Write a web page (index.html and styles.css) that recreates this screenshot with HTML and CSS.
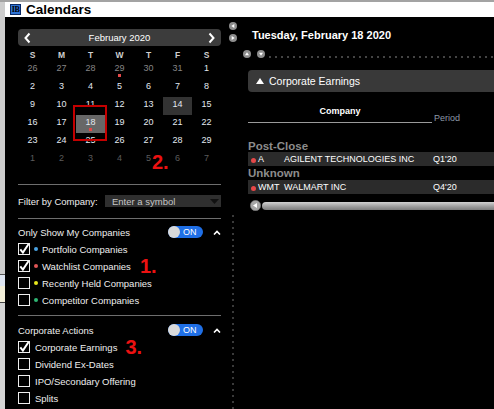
FILE: index.html
```html
<!DOCTYPE html>
<html>

<head>
    <title>Calendars</title>
    <meta name="viewport" content="width=device-width, initial-scale=1.0">
    <link rel="stylesheet" href="styles.css">
</head>

<body>
    <div class="desk"></div>
    <div class="window">
        <div class="titlebar">
            <span class="logo">IB</span>
            <span class="title">Calendars</span>
        </div>
        <div class="main">
            <div class="sidebar">
                <div class="cal">
                    <div class="cal-head">
                        <svg width="7" height="12" viewBox="0 0 7 12"><path d="M5.5 1.5L1.5 6l4 4.5" fill="none" stroke="#fff" stroke-width="2"/></svg>
                        <span>February 2020</span>
                        <svg width="7" height="12" viewBox="0 0 7 12"><path d="M1.5 1.5l4 4.5-4 4.5" fill="none" stroke="#fff" stroke-width="2"/></svg>
                    </div>
                    <div class="cal-grid">
                        <div class="dow">S</div><div class="dow">M</div><div class="dow">T</div><div class="dow">W</div><div class="dow">T</div><div class="dow">F</div><div class="dow">S</div>

                        <div class="day other">26</div><div class="day other">27</div><div class="day other">28</div><div class="day other">29<i class="ev"></i></div><div class="day other">30</div><div class="day other">31</div><div class="day">1</div>
                        <div class="day">2</div><div class="day">3</div><div class="day">4</div><div class="day">5</div><div class="day">6</div><div class="day">7</div><div class="day">8</div>
                        <div class="day">9</div><div class="day">10</div><div class="day">11</div><div class="day">12</div><div class="day">13</div><div class="day sel">14</div><div class="day">15</div>
                        <div class="day">16</div><div class="day">17</div><div class="day today">18<i class="ev"></i></div><div class="day">19</div><div class="day">20</div><div class="day">21</div><div class="day">22</div>
                        <div class="day">23</div><div class="day">24</div><div class="day">25</div><div class="day">26</div><div class="day">27</div><div class="day">28</div><div class="day">29</div>
                        <div class="day next">1</div><div class="day next">2</div><div class="day next">3</div><div class="day next">4</div><div class="day next">5</div><div class="day next">6</div><div class="day next">7</div>
                    </div>
                    <div class="mark-box"></div>
                    <span class="note note-cal">2.</span>
                </div>

                <div class="divider first"></div>

                <div class="filter">
                    <span>Filter by Company:</span>
                    <div class="symbol">
                        <span>Enter a symbol</span>
                        <svg width="9" height="5" viewBox="0 0 9 5"><path d="M0 0h9L4.5 5z" fill="#111"/></svg>
                    </div>
                </div>

                <div class="divider"></div>

                <div class="group-head">
                    <span>Only Show My Companies</span>
                    <div class="toggle"><span class="knob"></span><span>ON</span></div>
                    <svg class="chev" width="8" height="5" viewBox="0 0 8 5"><path d="M1 4.5L4 1.5l3 3" fill="none" stroke="#fff" stroke-width="1.6"/></svg>
                </div>
                <div class="options">
                    <div class="opt">
                        <svg class="cb" viewBox="0 0 12 12"><rect x=".5" y=".5" width="11" height="11" fill="#000" stroke="#eee"/><path d="M2.3 6.4l2.6 3.2L10.6 1" fill="none" stroke="#fff" stroke-width="2"/></svg>
                        <i class="dot blue"></i><span>Portfolio Companies</span>
                    </div>
                    <div class="opt">
                        <svg class="cb" viewBox="0 0 12 12"><rect x=".5" y=".5" width="11" height="11" fill="#000" stroke="#eee"/><path d="M2.3 6.4l2.6 3.2L10.6 1" fill="none" stroke="#fff" stroke-width="2"/></svg>
                        <i class="dot red"></i><span>Watchlist Companies</span><span class="note note-1">1.</span>
                    </div>
                    <div class="opt">
                        <svg class="cb" viewBox="0 0 12 12"><rect x=".5" y=".5" width="11" height="11" fill="#000" stroke="#eee"/></svg>
                        <i class="dot yellow"></i><span>Recently Held Companies</span>
                    </div>
                    <div class="opt">
                        <svg class="cb" viewBox="0 0 12 12"><rect x=".5" y=".5" width="11" height="11" fill="#000" stroke="#eee"/></svg>
                        <i class="dot green"></i><span>Competitor Companies</span>
                    </div>
                </div>

                <div class="divider second"></div>

                <div class="group-head">
                    <span>Corporate Actions</span>
                    <div class="toggle"><span class="knob"></span><span>ON</span></div>
                    <svg class="chev" width="8" height="5" viewBox="0 0 8 5"><path d="M1 4.5L4 1.5l3 3" fill="none" stroke="#fff" stroke-width="1.6"/></svg>
                </div>
                <div class="options">
                    <div class="opt plain">
                        <svg class="cb" viewBox="0 0 12 12"><rect x=".5" y=".5" width="11" height="11" fill="#000" stroke="#eee"/><path d="M2.3 6.4l2.6 3.2L10.6 1" fill="none" stroke="#fff" stroke-width="2"/></svg>
                        <span>Corporate Earnings</span><span class="note note-3">3.</span>
                    </div>
                    <div class="opt plain">
                        <svg class="cb" viewBox="0 0 12 12"><rect x=".5" y=".5" width="11" height="11" fill="#000" stroke="#eee"/></svg>
                        <span>Dividend Ex-Dates</span>
                    </div>
                    <div class="opt plain">
                        <svg class="cb" viewBox="0 0 12 12"><rect x=".5" y=".5" width="11" height="11" fill="#000" stroke="#eee"/></svg>
                        <span>IPO/Secondary Offering</span>
                    </div>
                    <div class="opt plain">
                        <svg class="cb" viewBox="0 0 12 12"><rect x=".5" y=".5" width="11" height="11" fill="#000" stroke="#eee"/></svg>
                        <span>Splits</span>
                    </div>
                </div>
            </div>

            <div class="splitter">
                <svg width="8" height="8" viewBox="0 0 8 8"><circle cx="4" cy="4" r="4" fill="#8e8e8e"/><path d="M2.3 4L5.3 2v4z" fill="#fff"/></svg>
                <svg width="8" height="8" viewBox="0 0 8 8"><circle cx="4" cy="4" r="4" fill="#8e8e8e"/><path d="M5.7 4L2.7 2v4z" fill="#fff"/></svg>
                <div class="split-line"></div>
            </div>

            <div class="content">
                <div class="day-title">Tuesday, February 18 2020</div>
                <div class="nav-row">
                    <svg width="8" height="8" viewBox="0 0 8 8"><circle cx="4" cy="4" r="4" fill="#8e8e8e"/><path d="M4 2.2L6 5.2H2z" fill="#fff"/></svg>
                    <svg width="8" height="8" viewBox="0 0 8 8"><circle cx="4" cy="4" r="4" fill="#8e8e8e"/><path d="M4 5.8L6 2.8H2z" fill="#fff"/></svg>
                    <div class="dots"></div>
                </div>

                <div class="section-bar">
                    <svg width="8" height="6" viewBox="0 0 8 6"><path d="M4 0l4 6H0z" fill="#fff"/></svg>
                    <span>Corporate Earnings</span>
                </div>

                <div class="thead">
                    <div class="th-company">Company</div>
                    <div class="th-period">Period</div>
                </div>

                <div class="when">Post-Close</div>
                <div class="row">
                    <span class="sym"><i class="rdot"></i>A</span>
                    <span>AGILENT TECHNOLOGIES INC</span>
                    <span>Q1'20</span>
                </div>
                <div class="when second">Unknown</div>
                <div class="row second">
                    <span class="sym"><i class="rdot"></i>WMT</span>
                    <span>WALMART INC</span>
                    <span>Q4'20</span>
                </div>

                <div class="hscroll">
                    <svg width="11" height="11" viewBox="0 0 11 11"><circle cx="5.5" cy="5.5" r="5.2" fill="#a5a5a5" stroke="#6d6d6d" stroke-width=".6"/><path d="M3 5.5L7 3v5z" fill="#fff"/></svg>
                    <div class="track"></div>
                </div>
            </div>
        </div>
    </div>
</body>

</html>
```

FILE: styles.css
```css
body {
    margin: 0;
    width: 494px;
    height: 409px;
    overflow: hidden;
    display: flex;
    box-sizing: border-box;
    border-top: 2px solid #a3a3a3;
    background-color: #c9c9c9;
    font-family: 'Liberation Sans', Arial, sans-serif;
}

.desk {
    width: 5px;
    flex: none;
    background: linear-gradient(to bottom, #cdcdcd 0 272px, #555 272px 273px, #dfe6f2 273px 284px, #f3efd9 284px 300px, #444 300px 301px, #d4d4d4 301px);
}

.window {
    flex: 1;
    min-width: 0;
    display: flex;
    flex-direction: column;
}

.titlebar {
    height: 15px;
    flex: none;
    background-color: #fff;
    display: flex;
    align-items: center;
    padding-left: 5px;
    gap: 5px;
}

.logo {
    width: 11px;
    height: 11px;
    box-sizing: border-box;
    border: 1px solid #0a2a66;
    background-color: #2f74d6;
    color: #000;
    font-family: 'Liberation Serif', serif;
    font-weight: bold;
    font-size: 8px;
    line-height: 9px;
    text-align: center;
    letter-spacing: -0.5px;
}

.title {
    font-size: 13.5px;
    font-weight: bold;
    color: #000;
}

.main {
    flex: 1;
    min-height: 0;
    display: flex;
    background-color: #000;
}

/* left panel */

.sidebar {
    width: 223px;
    flex: none;
    box-sizing: border-box;
    padding: 12px 7px 0 13px;
    color: #eee;
    font-size: 9.5px;
}

.cal {
    position: relative;
}

.cal-head {
    height: 17px;
    background-color: #3c3c3c;
    border-radius: 4px;
    display: flex;
    align-items: center;
    justify-content: space-between;
    padding: 0 6px;
    color: #fff;
    font-size: 9.5px;
}

.cal-grid {
    display: grid;
    grid-template-columns: repeat(7, 29px);
    margin-top: 3px;
}

.dow {
    line-height: 12px;
    text-align: center;
    font-size: 8.5px;
    font-weight: bold;
    color: #cfcfcf;
}

.day {
    height: 18px;
    line-height: 14px;
    text-align: center;
    font-size: 9px;
    color: #e2e8f0;
}

.day.other {
    color: #858585;
}

.day.next {
    color: #5c5c5c;
}

.day.sel {
    background-color: #333;
}

.day.today {
    background-color: #676767;
}

.ev {
    display: block;
    width: 3px;
    height: 3px;
    margin: -1px auto 0;
    background-color: #e34848;
}

.mark-box {
    position: absolute;
    left: 55px;
    top: 76px;
    width: 34px;
    height: 36px;
    box-sizing: border-box;
    border: 2px solid #c40000;
}

.note {
    font-size: 20px;
    font-weight: bold;
    line-height: 12px;
    color: #ec1111;
}

.note-cal {
    position: absolute;
    left: 134px;
    top: 127px;
}

.note-1 {
    margin-left: 9px;
}

.note-3 {
    margin-left: 8px;
}

.divider {
    height: 1px;
    background-color: #6e6e6e;
    margin-top: 11px;
}

.divider.first {
    margin-top: 15px;
}

.divider.second {
    margin-top: 9px;
}

.filter {
    display: flex;
    align-items: center;
    height: 12px;
    margin-top: 10px;
}

.symbol {
    margin-left: auto;
    width: 116px;
    height: 12px;
    box-sizing: border-box;
    padding: 0 2px 0 7px;
    background-color: #2f2f2f;
    display: flex;
    align-items: center;
    justify-content: space-between;
    color: #c6c6c6;
}

.group-head {
    display: flex;
    align-items: center;
    height: 12px;
    margin-top: 7px;
}

.divider.second + .group-head {
    margin-top: 8px;
}

.toggle {
    margin-left: auto;
    width: 35px;
    height: 12px;
    border-radius: 6px;
    background-color: #1f6fe6;
    display: flex;
    align-items: center;
    gap: 3px;
    color: #fff;
    font-size: 9px;
}

.knob {
    width: 12px;
    height: 12px;
    border-radius: 50%;
    background-color: #d9d9d9;
}

.chev {
    margin-left: 10px;
}

.options {
    display: flex;
    flex-direction: column;
    gap: 5px;
    margin-top: 5px;
}

.opt {
    display: flex;
    align-items: center;
    height: 12px;
}

.cb {
    width: 12px;
    height: 12px;
    flex: none;
    overflow: visible;
}

.dot {
    width: 4px;
    height: 4px;
    border-radius: 50%;
    margin: 0 4px;
}

.dot.blue { background-color: #4aa2e2; }
.dot.red { background-color: #e05656; }
.dot.yellow { background-color: #e6e61c; }
.dot.green { background-color: #2fb673; }

.opt.plain .cb {
    margin-right: 5px;
}

/* splitter */

.splitter {
    width: 9px;
    flex: none;
    display: flex;
    flex-direction: column;
    align-items: center;
    padding-top: 5px;
    gap: 4px;
}

.split-line {
    flex: 1;
    width: 2px;
    margin-top: 169px;
    background: linear-gradient(to bottom, #3a3a3a 2px, transparent 2px) 0 0 / 2px 6px repeat-y;
}

/* right panel */

.content {
    flex: 1;
    min-width: 0;
    overflow: hidden;
    padding-left: 11px;
    color: #fff;
}

.day-title {
    margin: 11px 0 0 4px;
    font-size: 11px;
    font-weight: bold;
    line-height: 14px;
}

.nav-row {
    display: flex;
    align-items: center;
    gap: 6px;
    margin: 8px 0 0 -5px;
    height: 8px;
}

.dots {
    flex: 1;
    height: 2px;
    margin: 5px 0 0 -2px;
    background: linear-gradient(to right, #444 2px, transparent 2px) 0 0 / 6px 2px repeat-x;
}

.section-bar {
    margin-top: 12px;
    height: 22px;
    background-color: #393939;
    border-radius: 4px 0 0 4px;
    display: flex;
    align-items: center;
    gap: 5px;
    padding-left: 8px;
    font-size: 10.5px;
}

.thead {
    display: flex;
    align-items: flex-end;
    margin-top: 13px;
}

.th-company {
    width: 184px;
    text-align: center;
    font-size: 9px;
    font-weight: bold;
    line-height: 12px;
    padding-bottom: 5px;
    border-bottom: 1px solid #9a9a9a;
}

.th-period {
    padding-left: 2px;
    font-size: 9px;
    line-height: 10px;
    color: #8d99a7;
}

.when {
    margin-top: 17px;
    font-size: 11.5px;
    font-weight: bold;
    line-height: 12px;
    color: #8c8c8c;
}

.when.second {
    margin-top: 1px;
}

.row {
    height: 14px;
    background-color: #2b2b2b;
    display: grid;
    grid-template-columns: 36px 149px 1fr;
    align-items: center;
    font-size: 9px;
}

.row.second {
    margin-top: 1px;
}

.sym {
    display: flex;
    align-items: center;
    padding-left: 3px;
}

.rdot {
    width: 5px;
    height: 5px;
    border-radius: 50%;
    background-color: #e54848;
    margin: 2px 2px 0 0;
}

.hscroll {
    display: flex;
    align-items: center;
    height: 11px;
    margin: 6px 0 0 2px;
}

.track {
    flex: 1;
    height: 8px;
    margin-left: 1px;
    border-radius: 4px 0 0 4px;
    background: linear-gradient(to bottom, #d2d2d2, #9a9a9a 60%, #7c7c7c);
}
```
